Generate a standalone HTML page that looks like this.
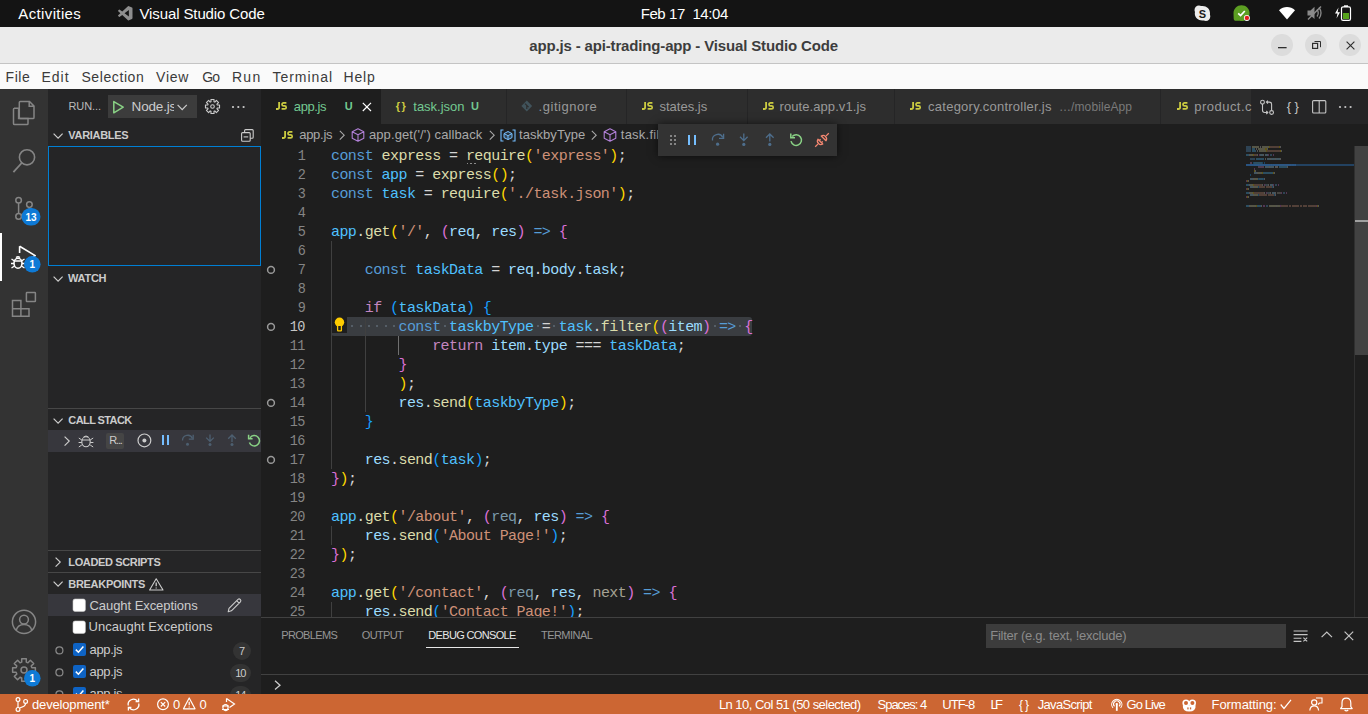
<!DOCTYPE html>
<html><head><meta charset="utf-8">
<style>
*{box-sizing:border-box;margin:0;padding:0}
html,body{width:1368px;height:714px;overflow:hidden;background:#1e1e1e;font-family:"Liberation Sans",sans-serif}
body{position:relative}
.a{position:absolute}
.t{position:absolute;white-space:pre;line-height:1}
svg{position:absolute;overflow:visible}
</style></head><body>
<div class="a" style="left:0px;top:0px;width:1368px;height:27px;background:#141414;"></div><div class="t" style='left:18.30px;top:6.30px;font-size:15px;color:#ffffff;letter-spacing:0.369px;'>Activities</div><svg style="left:118px;top:6px;" width="15" height="15" viewBox="0 0 15 15"><g transform="scale(0.145)"><path d="M96.46 10.8L75.86.87a6.23 6.23 0 0 0-7.1 1.2L29.35 38.04 12.17 25a4.16 4.16 0 0 0-5.31.24L1.35 30.25a4.16 4.16 0 0 0 0 6.15L16.25 50 1.35 63.6a4.16 4.16 0 0 0 0 6.150l5.5 5a4.16 4.16 0 0 0 5.32.24l17.18-13.040 39.4 35.96a6.23 6.23 0 0 0 7.1 1.2l20.6-9.92a6.24 6.24 0 0 0 3.540-5.63V16.43a6.24 6.24 0 0 0-3.53-5.63zM75.02 72.7L45.11 50l29.9-22.7z" fill="#8e8e8e" fill-rule="evenodd"/></g></svg><div class="t" style='left:139.50px;top:6.10px;font-size:15px;color:#ffffff;letter-spacing:-0.116px;'>Visual Studio Code</div><div class="t" style='left:640.70px;top:5.60px;font-size:15px;color:#ffffff;letter-spacing:-0.411px;'>Feb 17  14:04</div><svg style="left:1194px;top:5px;" width="17" height="16" viewBox="0 0 17 16"><path d="M5 0.5 C2.5 0.5 0.5 2.5 0.5 5 C0.5 5.8 0.7 6.5 1 7.1 C0.9 7.6 0.8 8.1 0.8 8.6 C0.8 12.6 4.1 15.6 8.2 15.6 C8.7 15.6 9.2 15.6 9.7 15.5 C10.3 15.8 11 16 11.8 16 C14.3 16 16.3 14 16.3 11.5 C16.3 10.8 16.1 10.1 15.9 9.5 C16 9 16 8.6 16 8.1 C16 4.1 12.7 1 8.6 1 C8.1 1 7.6 1 7.1 1.1 C6.5 0.7 5.8 0.5 5 0.5 Z" fill="#ececec"/><text x="8.4" y="12.6" font-family="Liberation Sans" font-weight="700" font-size="11" fill="#1a1a1a" text-anchor="middle">S</text></svg><svg style="left:1233px;top:5px;" width="18" height="17" viewBox="0 0 18 17"><path d="M8.5 0.3 C13 0.3 16.6 3.8 16.6 8.2 C16.6 12.6 13 16 8.5 16 C7.9 16 7.3 15.9 6.8 15.8 L2.8 15.8 C1.6 15.8 0.7 14.9 0.7 13.7 L0.5 8.2 C0.5 3.8 4.1 0.3 8.5 0.3Z" fill="#5c9e22"/><path d="M5.2 8.3 L7.6 10.6 L11.8 6" stroke="#fff" stroke-width="1.7" fill="none"/><circle cx="13.9" cy="12.9" r="3" fill="#fff"/><circle cx="13.9" cy="12.9" r="2.2" fill="#e0201c"/></svg><svg style="left:1279px;top:7px;" width="16" height="13" viewBox="0 0 16 13"><path d="M0 3.2 C4.6 -1 11.4 -1 16 3.2 L8 12.4 Z" fill="#ffffff"/></svg><svg style="left:1307px;top:6px;" width="16" height="14" viewBox="0 0 16 14"><path d="M0.5 4.5 H3.5 L7.5 0.8 V13 L3.5 9.5 H0.5 Z" fill="#8a8a8a"/><path d="M10 3.5 Q12.5 7 10 10.5 M12 1.5 Q16 7 12 12.5" stroke="#8a8a8a" stroke-width="1.3" fill="none"/><path d="M1 13.5 L14 0.5" stroke="#8a8a8a" stroke-width="1.4"/></svg><svg style="left:1334px;top:5px;" width="18" height="16" viewBox="0 0 18 16"><path d="M4.5 2.5 L1 8.5 H3.5 L2.5 13.5 L6 7.3 H3.6 Z" fill="#fff"/><rect x="7.5" y="1.8" width="9" height="13.6" rx="1.6" fill="none" stroke="#fff" stroke-width="1.2"/><rect x="10" y="0.3" width="4" height="1.6" fill="#fff"/><rect x="9" y="8" width="6" height="6" fill="#56a21b"/></svg><div class="a" style="left:0px;top:27px;width:1368px;height:37px;background:#ebebeb;"></div><div class="a" style="left:0px;top:63px;width:1368px;height:1px;background:#c4c4c4;"></div><div class="t" style='left:529.20px;top:38.00px;font-size:15px;color:#3d3d3d;font-weight:700;letter-spacing:-0.153px;'>app.js - api-trading-app - Visual Studio Code</div><svg style="left:1271px;top:34px;" width="22" height="22" viewBox="0 0 22 22"><circle cx="11" cy="11" r="11" fill="#dcdcdc"/></svg><svg style="left:1305px;top:34px;" width="22" height="22" viewBox="0 0 22 22"><circle cx="11" cy="11" r="11" fill="#dcdcdc"/></svg><svg style="left:1339px;top:34px;" width="22" height="22" viewBox="0 0 22 22"><circle cx="11" cy="11" r="11" fill="#dcdcdc"/></svg><svg style="left:1277.5px;top:46.6px;" width="9" height="2" viewBox="0 0 9 2"><rect x="0" y="0" width="8.6" height="1.3" fill="#2e2e2e"/></svg><svg style="left:1311px;top:40px;" width="10" height="10" viewBox="0 0 10 10"><rect x="1.6" y="3.4" width="5" height="5" fill="none" stroke="#2e2e2e" stroke-width="1.2"/><path d="M3.5 1.5 H9.5 V7.2" fill="none" stroke="#2e2e2e" stroke-width="1"/></svg><svg style="left:1345.5px;top:40.5px;" width="9" height="9" viewBox="0 0 9 9"><path d="M0.6 0.6 L8.4 8.4 M8.4 0.6 L0.6 8.4" stroke="#2e2e2e" stroke-width="1.15"/></svg><div class="a" style="left:0px;top:64px;width:1368px;height:25px;background:#fafafa;"></div><div class="t" style='left:5.60px;top:70.05px;font-size:14px;color:#3b3b3b;letter-spacing:0.543px;'>File</div><div class="t" style='left:41.40px;top:70.05px;font-size:14px;color:#3b3b3b;letter-spacing:1.022px;'>Edit</div><div class="t" style='left:81.40px;top:70.05px;font-size:14px;color:#3b3b3b;letter-spacing:0.599px;'>Selection</div><div class="t" style='left:156.10px;top:70.05px;font-size:14px;color:#3b3b3b;letter-spacing:0.740px;'>View</div><div class="t" style='left:202.30px;top:70.05px;font-size:14px;color:#3b3b3b;letter-spacing:-0.990px;'>Go</div><div class="t" style='left:232.00px;top:70.05px;font-size:14px;color:#3b3b3b;letter-spacing:1.252px;'>Run</div><div class="t" style='left:272.50px;top:70.05px;font-size:14px;color:#3b3b3b;letter-spacing:0.944px;'>Terminal</div><div class="t" style='left:343.40px;top:70.05px;font-size:14px;color:#3b3b3b;letter-spacing:0.898px;'>Help</div><div class="a" style="left:0px;top:89px;width:48px;height:605px;background:#333333;"></div><svg style="left:12px;top:100px;" width="24" height="26" viewBox="0 0 24 26"><path d="M2 8.2 H6.6 V18.6 H16 V23.5 Q16 24.6 15 24.6 H2.6 Q1.5 24.6 1.5 23.5 V9.2 Q1.5 8.2 2.6 8.2 Z" fill="none" stroke="#858585" stroke-width="1.5"/><path d="M8.3 1.5 H17.5 L22 6 V17.4 Q22 18.6 21 18.6 H8.3 Q7.3 18.6 7.3 17.5 V2.5 Q7.3 1.5 8.3 1.5 Z M17.2 1.5 V6.3 H22" fill="none" stroke="#858585" stroke-width="1.5"/></svg><svg style="left:12px;top:148px;" width="24" height="26" viewBox="0 0 24 26"><circle cx="15" cy="9.3" r="7.6" fill="none" stroke="#858585" stroke-width="1.6"/><path d="M9.7 15 L1.4 24.2" stroke="#858585" stroke-width="1.8"/></svg><svg style="left:12px;top:194px;" width="24" height="28" viewBox="0 0 24 28"><circle cx="6.6" cy="6.3" r="2.8" fill="none" stroke="#858585" stroke-width="1.5"/><circle cx="17.4" cy="10.6" r="2.8" fill="none" stroke="#858585" stroke-width="1.5"/><circle cx="6.6" cy="22.4" r="2.8" fill="none" stroke="#858585" stroke-width="1.5"/><path d="M6.6 9.1 V19.6 M17.4 13.4 Q17.4 18 9.2 20.8" fill="none" stroke="#858585" stroke-width="1.5"/></svg><svg style="left:21px;top:208px;" width="20" height="18" viewBox="0 0 20 18"><rect x="0.5" y="0" width="19" height="17.6" rx="8.8" fill="#0e7ad6"/><text x="10" y="12.8" font-family="Liberation Sans" font-weight="700" font-size="10" fill="#fff" text-anchor="middle">13</text></svg><div class="a" style="left:0px;top:233px;width:2px;height:48px;background:#ffffff;"></div><svg style="left:10px;top:244px;" width="28" height="28" viewBox="0 0 28 28"><path d="M9.6 2.2 L25.2 11.6 L18 15.8" fill="none" stroke="#ffffff" stroke-width="1.6" stroke-linejoin="round"/><path d="M9.6 2.2 V9" fill="none" stroke="#ffffff" stroke-width="1.6"/><ellipse cx="8" cy="19.3" rx="4" ry="5" fill="none" stroke="#fff" stroke-width="1.6"/><path d="M4.2 17 H11.8 M1.5 15 L4.5 17 M14.5 15 L11.5 17 M1 19.5 H4 M12 19.5 H15 M1.5 24 L4.5 22 M14.5 24 L11.5 22 M6 13.5 Q8 12 10 13.5" fill="none" stroke="#fff" stroke-width="1.4"/></svg><svg style="left:24px;top:256px;" width="17" height="17" viewBox="0 0 17 17"><circle cx="8.3" cy="8.3" r="8.3" fill="#0e7ad6"/><text x="8.4" y="12" font-family="Liberation Sans" font-weight="700" font-size="10" fill="#fff" text-anchor="middle">1</text></svg><svg style="left:11px;top:291px;" width="26" height="27" viewBox="0 0 26 27"><path d="M1.5 9.5 H9.9 V17.7 H18 V25.2 H1.5 Z M1.5 17.7 H9.9 V25.2 M9.9 17.7 V9.5" fill="none" stroke="#858585" stroke-width="1.5"/><rect x="15.4" y="1.6" width="9" height="9" rx="0.6" fill="none" stroke="#858585" stroke-width="1.5"/></svg><svg style="left:11px;top:609px;" width="26" height="26" viewBox="0 0 26 26"><circle cx="13" cy="12.8" r="11.6" fill="none" stroke="#858585" stroke-width="1.5"/><circle cx="13" cy="10.6" r="4.4" fill="none" stroke="#858585" stroke-width="1.5"/><path d="M5.2 21.2 Q7 15.6 13 15.6 Q19 15.6 20.8 21.2" fill="none" stroke="#858585" stroke-width="1.5"/></svg><svg style="left:12px;top:658px;" width="24" height="24" viewBox="0 0 24 24"><path d="M19.88 9.73 L23.37 9.70 L23.37 14.30 L19.88 14.27 L19.17 15.97 L21.67 18.41 L18.41 21.67 L15.97 19.17 L14.27 19.88 L14.30 23.37 L9.70 23.37 L9.73 19.88 L8.03 19.17 L5.59 21.67 L2.33 18.41 L4.83 15.97 L4.12 14.27 L0.63 14.30 L0.63 9.70 L4.12 9.73 L4.83 8.03 L2.33 5.59 L5.59 2.33 L8.03 4.83 L9.73 4.12 L9.70 0.63 L14.30 0.63 L14.27 4.12 L15.97 4.83 L18.41 2.33 L21.67 5.59 L19.17 8.03 Z" fill="none" stroke="#858585" stroke-width="1.5" stroke-linejoin="round"/><circle cx="12" cy="12" r="3" fill="none" stroke="#858585" stroke-width="1.5"/></svg><svg style="left:24px;top:670px;" width="17" height="17" viewBox="0 0 17 17"><circle cx="8.3" cy="8.3" r="8.3" fill="#0e7ad6"/><text x="8.4" y="12" font-family="Liberation Sans" font-weight="700" font-size="10" fill="#fff" text-anchor="middle">1</text></svg><div class="a" style="left:48px;top:89px;width:213px;height:605px;background:#252526;"></div><div class="t" style='left:68.50px;top:100.69px;font-size:11px;color:#bbbbbb;letter-spacing:-0.089px;'>RUN...</div><div class="a" style="left:108px;top:95px;width:89px;height:23px;background:#3c3c3c;"></div><svg style="left:112px;top:100px;" width="13" height="15" viewBox="0 0 13 15"><path d="M1.8 1.6 L11.2 7.2 L1.8 12.8 Z" fill="none" stroke="#89d185" stroke-width="1.5" stroke-linejoin="round"/></svg><div class="a" style="left:130px;top:95px;width:44px;height:23px;overflow:hidden"><div class="t" style='left:1.60px;top:4.57px;font-size:13.5px;color:#cccccc;letter-spacing:-0.171px;'>Node.js</div></div><svg style="left:177px;top:104px;" width="11" height="7" viewBox="0 0 11 7"><path d="M0.6 0.8 L5.2 5.6 L9.8 0.8" fill="none" stroke="#cccccc" stroke-width="1.2"/></svg><svg style="left:204.6px;top:99.4px;" width="15" height="15" viewBox="0 0 15 15"><path d="M12.28 6.02 L14.53 5.93 L14.53 9.07 L12.28 8.98 L11.92 9.83 L13.58 11.36 L11.36 13.58 L9.83 11.92 L8.98 12.28 L9.07 14.53 L5.93 14.53 L6.02 12.28 L5.17 11.92 L3.64 13.58 L1.42 11.36 L3.08 9.83 L2.72 8.98 L0.47 9.07 L0.47 5.93 L2.72 6.02 L3.08 5.17 L1.42 3.64 L3.64 1.42 L5.17 3.08 L6.02 2.72 L5.93 0.47 L9.07 0.47 L8.98 2.72 L9.83 3.08 L11.36 1.42 L13.58 3.64 L11.92 5.17 Z" fill="none" stroke="#cccccc" stroke-width="1.1" stroke-linejoin="round"/><circle cx="7.5" cy="7.5" r="1.8" fill="none" stroke="#cccccc" stroke-width="1.1"/></svg><svg style="left:231px;top:105px;" width="15" height="4" viewBox="0 0 15 4"><circle cx="2" cy="2" r="1.1" fill="#cccccc"/><circle cx="7.3" cy="2" r="1.1" fill="#cccccc"/><circle cx="12.6" cy="2" r="1.1" fill="#cccccc"/></svg><svg style="left:53px;top:132.5px;" width="11" height="7" viewBox="0 0 11 7"><path d="M0.6 0.6 L5.1 5.2 L9.6 0.6" fill="none" stroke="#cccccc" stroke-width="1.2"/></svg><div class="t" style='left:68.30px;top:130.29px;font-size:11px;color:#cccccc;font-weight:700;letter-spacing:-0.301px;'>VARIABLES</div><svg style="left:240px;top:128px;" width="15" height="15" viewBox="0 0 15 15"><rect x="4.6" y="1.6" width="8.6" height="8.6" rx="1" fill="none" stroke="#cccccc" stroke-width="1.1"/><rect x="1.6" y="4.6" width="8.6" height="8.6" rx="1" fill="#252526" stroke="#cccccc" stroke-width="1.1"/><path d="M3.6 8.9 H8.2" stroke="#cccccc" stroke-width="1.1"/></svg><div class="a" style="left:48px;top:146px;width:213px;height:120px;background:transparent;border:1px solid #007fd4"></div><svg style="left:53px;top:275.6px;" width="11" height="7" viewBox="0 0 11 7"><path d="M0.6 0.6 L5.1 5.2 L9.6 0.6" fill="none" stroke="#cccccc" stroke-width="1.2"/></svg><div class="t" style='left:68.10px;top:273.49px;font-size:11px;color:#cccccc;font-weight:700;letter-spacing:-0.266px;'>WATCH</div><div class="a" style="left:48px;top:408px;width:213px;height:1px;background:#474747;"></div><svg style="left:53px;top:417.6px;" width="11" height="7" viewBox="0 0 11 7"><path d="M0.6 0.6 L5.1 5.2 L9.6 0.6" fill="none" stroke="#cccccc" stroke-width="1.2"/></svg><div class="t" style='left:68.30px;top:415.49px;font-size:11px;color:#cccccc;font-weight:700;letter-spacing:-0.590px;'>CALL STACK</div><div class="a" style="left:48px;top:430px;width:213px;height:22px;background:#37373d;"></div><svg style="left:64.2px;top:436px;" width="7" height="11" viewBox="0 0 7 11"><path d="M0.6 0.6 L5.2 5.1 L0.6 9.6" fill="none" stroke="#cccccc" stroke-width="1.2"/></svg><svg style="left:78px;top:433px;" width="16" height="16" viewBox="0 0 16 16"><ellipse cx="8" cy="8.8" rx="4.2" ry="5" fill="none" stroke="#cccccc" stroke-width="1.1"/><path d="M3.8 7 H12.2 M0.8 5 L3.8 7 M15.2 5 L12.2 7 M0.6 9.5 H3.8 M12.2 9.5 H15.4 M0.8 14 L3.8 12 M15.2 14 L12.2 12 M5.5 4 Q8 2 10.5 4" fill="none" stroke="#cccccc" stroke-width="1"/></svg><div class="a" style="left:106px;top:433px;width:18px;height:16px;background:#454545;border-radius:2px"></div><div class="t" style='left:109.30px;top:435.19px;font-size:11px;color:#cccccc;letter-spacing:-1.185px;'>R...</div><svg style="left:136.5px;top:432.6px;" width="15" height="15" viewBox="0 0 15 15"><circle cx="7.4" cy="7.4" r="6.4" fill="none" stroke="#cccccc" stroke-width="1.2"/><circle cx="7.4" cy="7.4" r="2" fill="#cccccc"/></svg><div class="a" style="left:162px;top:435px;width:2px;height:10px;background:#75beff;"></div><div class="a" style="left:167.4px;top:435px;width:2px;height:10px;background:#75beff;"></div><svg style="left:181px;top:434px;" width="14" height="13" viewBox="0 0 14 13"><path d="M1.5 6.5 A5.2 5.2 0 0 1 11.5 4.5" fill="none" stroke="#4d5f70" stroke-width="1.3"/><path d="M12.2 0.8 V5.2 H7.8" fill="none" stroke="#4d5f70" stroke-width="1.3"/><circle cx="6.5" cy="10.3" r="1.5" fill="#4d5f70"/></svg><svg style="left:203px;top:434px;" width="14" height="13" viewBox="0 0 14 13"><path d="M7 0.5 V7 M3.2 3.6 L7 7.4 L10.8 3.6" fill="none" stroke="#4d5f70" stroke-width="1.3"/><circle cx="7" cy="10.5" r="1.5" fill="#4d5f70"/></svg><svg style="left:225px;top:434px;" width="14" height="13" viewBox="0 0 14 13"><path d="M7 8 V1 M3.2 4.8 L7 1 L10.8 4.8" fill="none" stroke="#4d5f70" stroke-width="1.3"/><circle cx="7" cy="10.5" r="1.5" fill="#4d5f70"/></svg><svg style="left:247px;top:434px;" width="14" height="13" viewBox="0 0 14 13"><path d="M3 3.8 A5.2 5.2 0 1 1 2.4 8.5" fill="none" stroke="#89d185" stroke-width="1.5"/><path d="M1.6 0.8 V4.8 H5.6" fill="none" stroke="#89d185" stroke-width="1.5"/></svg><div class="a" style="left:48px;top:550px;width:213px;height:1px;background:#474747;"></div><svg style="left:55px;top:557px;" width="7" height="11" viewBox="0 0 7 11"><path d="M0.6 0.6 L5.2 5.1 L0.6 9.6" fill="none" stroke="#cccccc" stroke-width="1.2"/></svg><div class="t" style='left:68.30px;top:557.29px;font-size:11px;color:#cccccc;font-weight:700;letter-spacing:-0.364px;'>LOADED SCRIPTS</div><div class="a" style="left:48px;top:572px;width:213px;height:1px;background:#474747;"></div><svg style="left:53px;top:581px;" width="11" height="7" viewBox="0 0 11 7"><path d="M0.6 0.6 L5.1 5.2 L9.6 0.6" fill="none" stroke="#cccccc" stroke-width="1.2"/></svg><div class="t" style='left:68.30px;top:579.19px;font-size:11px;color:#cccccc;font-weight:700;letter-spacing:-0.302px;'>BREAKPOINTS</div><svg style="left:149px;top:578px;" width="15" height="13" viewBox="0 0 15 13"><path d="M7.2 0.8 L14 12 H0.6 Z" fill="none" stroke="#cccccc" stroke-width="1.1" stroke-linejoin="round"/><path d="M7.2 4.5 V8.2 M7.2 9.4 V10.6" stroke="#cccccc" stroke-width="1.3"/></svg><div class="a" style="left:48px;top:594px;width:213px;height:22px;background:#37373d;"></div><svg style="left:73px;top:599.3px;" width="13" height="13" viewBox="0 0 13 13"><rect x="0" y="0" width="12.4" height="12.4" rx="2" fill="#ffffff" stroke="#cacaca" stroke-width="0.6"/></svg><div class="t" style='left:89.50px;top:598.59px;font-size:13px;color:#cccccc;letter-spacing:-0.058px;'>Caught Exceptions</div><svg style="left:227px;top:598px;" width="16" height="15" viewBox="0 0 16 15"><path d="M1.2 13.8 L2 10.4 L11 1.4 Q12.2 0.4 13.4 1.6 Q14.4 2.8 13.4 3.8 L4.4 12.8 Z M9.8 2.8 L12.2 5.2" fill="none" stroke="#cccccc" stroke-width="1.1" stroke-linejoin="round"/></svg><svg style="left:73px;top:621.3px;" width="13" height="13" viewBox="0 0 13 13"><rect x="0" y="0" width="12.4" height="12.4" rx="2" fill="#ffffff" stroke="#cacaca" stroke-width="0.6"/></svg><div class="t" style='left:88.50px;top:620.49px;font-size:13px;color:#cccccc;letter-spacing:0.064px;'>Uncaught Exceptions</div><svg style="left:55px;top:645.5px;" width="9" height="9" viewBox="0 0 9 9"><circle cx="4.4" cy="4.4" r="3.5" fill="none" stroke="#8a8a8a" stroke-width="1.2"/></svg><svg style="left:73px;top:643px;" width="13" height="13" viewBox="0 0 13 13"><rect x="0" y="0" width="13" height="13" rx="2" fill="#0e63c4"/><path d="M2.8 6.6 L5.4 9.2 L10.4 3.6" fill="none" stroke="#ffffff" stroke-width="1.5"/></svg><div class="t" style='left:89.50px;top:643.39px;font-size:13px;color:#cccccc;letter-spacing:-0.318px;'>app.js</div><svg style="left:233px;top:642px;" width="18" height="18" viewBox="0 0 18 18"><circle cx="9" cy="9" r="9" fill="#333333"/></svg><div class="t" style='left:239.00px;top:645.69px;font-size:11px;color:#cccccc;'>7</div><svg style="left:55px;top:667.5px;" width="9" height="9" viewBox="0 0 9 9"><circle cx="4.4" cy="4.4" r="3.5" fill="none" stroke="#8a8a8a" stroke-width="1.2"/></svg><svg style="left:73px;top:665px;" width="13" height="13" viewBox="0 0 13 13"><rect x="0" y="0" width="13" height="13" rx="2" fill="#0e63c4"/><path d="M2.8 6.6 L5.4 9.2 L10.4 3.6" fill="none" stroke="#ffffff" stroke-width="1.5"/></svg><div class="t" style='left:89.50px;top:665.39px;font-size:13px;color:#cccccc;letter-spacing:-0.318px;'>app.js</div><div class="a" style="left:230.3px;top:664px;width:21px;height:18px;background:#333333;border-radius:9px"></div><div class="t" style='left:235.20px;top:667.69px;font-size:11px;color:#cccccc;letter-spacing:-1.118px;'>10</div><svg style="left:55px;top:689.5px;" width="9" height="9" viewBox="0 0 9 9"><circle cx="4.4" cy="4.4" r="3.5" fill="none" stroke="#8a8a8a" stroke-width="1.2"/></svg><svg style="left:73px;top:687px;" width="13" height="13" viewBox="0 0 13 13"><rect x="0" y="0" width="13" height="13" rx="2" fill="#0e63c4"/><path d="M2.8 6.6 L5.4 9.2 L10.4 3.6" fill="none" stroke="#ffffff" stroke-width="1.5"/></svg><div class="t" style='left:89.50px;top:687.39px;font-size:13px;color:#cccccc;letter-spacing:-0.318px;'>app.js</div><div class="a" style="left:230.3px;top:686px;width:21px;height:18px;background:#333333;border-radius:9px"></div><div class="t" style='left:235.20px;top:689.69px;font-size:11px;color:#cccccc;letter-spacing:-1.118px;'>14</div><div class="a" style="left:261px;top:89px;width:1107px;height:35px;background:#252526;"></div><div class="a" style="left:261px;top:89px;width:119.5px;height:35px;background:#1e1e1e;"></div><div class="a" style="left:380.5px;top:89px;width:125.89999999999998px;height:35px;background:#2d2d2d;"></div><div class="a" style="left:507.4px;top:89px;width:118.89999999999998px;height:35px;background:#2d2d2d;"></div><div class="a" style="left:627.3px;top:89px;width:119.5px;height:35px;background:#2d2d2d;"></div><div class="a" style="left:747.8px;top:89px;width:146.5px;height:35px;background:#2d2d2d;"></div><div class="a" style="left:895.3px;top:89px;width:264.70000000000005px;height:35px;background:#2d2d2d;"></div><div class="a" style="left:1161px;top:89px;width:90px;height:35px;background:#2d2d2d;"></div><svg style="left:276px;top:102.2px;" width="11" height="8" viewBox="0 0 11 8"><path d="M3.1 0 V5.2 Q3.1 7 1.3 7 H0" fill="none" stroke="#cbcb41" stroke-width="1.8"/><path d="M10.4 0.9 H7.6 Q6 0.9 6 2.4 Q6 3.9 7.6 3.9 H8.6 Q10.2 3.9 10.2 5.4 Q10.2 6.9 8.6 6.9 H5.6" fill="none" stroke="#cbcb41" stroke-width="1.7"/></svg><div class="t" style='left:293.80px;top:99.69px;font-size:13px;color:#73c991;letter-spacing:-0.398px;'>app.js</div><div class="t" style='left:344.70px;top:101.39px;font-size:11px;color:#73c991;font-weight:700;'>U</div><svg style="left:361.5px;top:102px;" width="10" height="10" viewBox="0 0 10 10"><path d="M0.8 0.8 L9 9 M9 0.8 L0.8 9" stroke="#ffffff" stroke-width="1.2"/></svg><div class="t" style='left:395.70px;top:101.09px;font-size:11px;color:#cbcb41;font-weight:700;letter-spacing:-0.768px;'>{ }</div><div class="t" style='left:413.30px;top:99.69px;font-size:13px;color:#73c991;letter-spacing:-0.021px;'>task.json</div><div class="t" style='left:470.90px;top:101.39px;font-size:11px;color:#73c991;font-weight:700;'>U</div><svg style="left:521px;top:100px;" width="12" height="12" viewBox="0 0 12 12"><path d="M5.8 0.6 L11.2 6 L5.8 11.4 L0.4 6 Z" fill="#41535b"/><path d="M4 3.6 L7.6 7.2 M5.8 5.4 V9" stroke="#2d2d2d" stroke-width="1.2"/></svg><div class="t" style='left:538.60px;top:99.69px;font-size:13px;color:#999999;letter-spacing:0.528px;'>.gitignore</div><svg style="left:641.9px;top:102.2px;" width="11" height="8" viewBox="0 0 11 8"><path d="M3.1 0 V5.2 Q3.1 7 1.3 7 H0" fill="none" stroke="#cbcb41" stroke-width="1.8"/><path d="M10.4 0.9 H7.6 Q6 0.9 6 2.4 Q6 3.9 7.6 3.9 H8.6 Q10.2 3.9 10.2 5.4 Q10.2 6.9 8.6 6.9 H5.6" fill="none" stroke="#cbcb41" stroke-width="1.7"/></svg><div class="t" style='left:659.50px;top:99.69px;font-size:13px;color:#999999;'>states.js</div><svg style="left:762.5px;top:102.2px;" width="11" height="8" viewBox="0 0 11 8"><path d="M3.1 0 V5.2 Q3.1 7 1.3 7 H0" fill="none" stroke="#cbcb41" stroke-width="1.8"/><path d="M10.4 0.9 H7.6 Q6 0.9 6 2.4 Q6 3.9 7.6 3.9 H8.6 Q10.2 3.9 10.2 5.4 Q10.2 6.9 8.6 6.9 H5.6" fill="none" stroke="#cbcb41" stroke-width="1.7"/></svg><div class="t" style='left:779.50px;top:99.69px;font-size:13px;color:#999999;letter-spacing:0.080px;'>route.app.v1.js</div><svg style="left:910.4px;top:102.2px;" width="11" height="8" viewBox="0 0 11 8"><path d="M3.1 0 V5.2 Q3.1 7 1.3 7 H0" fill="none" stroke="#cbcb41" stroke-width="1.8"/><path d="M10.4 0.9 H7.6 Q6 0.9 6 2.4 Q6 3.9 7.6 3.9 H8.6 Q10.2 3.9 10.2 5.4 Q10.2 6.9 8.6 6.9 H5.6" fill="none" stroke="#cbcb41" stroke-width="1.7"/></svg><div class="t" style='left:928.10px;top:99.69px;font-size:13px;color:#999999;letter-spacing:0.240px;'>category.controller.js</div><div class="t" style='left:1059.00px;top:100.54px;font-size:12px;color:#7a7a7a;letter-spacing:0.094px;'>…/mobileApp</div><svg style="left:1176.6px;top:102.2px;" width="11" height="8" viewBox="0 0 11 8"><path d="M3.1 0 V5.2 Q3.1 7 1.3 7 H0" fill="none" stroke="#cbcb41" stroke-width="1.8"/><path d="M10.4 0.9 H7.6 Q6 0.9 6 2.4 Q6 3.9 7.6 3.9 H8.6 Q10.2 3.9 10.2 5.4 Q10.2 6.9 8.6 6.9 H5.6" fill="none" stroke="#cbcb41" stroke-width="1.7"/></svg><div class="a" style="left:1161px;top:89px;width:91px;height:35px;overflow:hidden"><div class="t" style='left:33.20px;top:10.69px;font-size:13px;color:#999999;letter-spacing:0.489px;'>product.controller.js</div></div><svg style="left:1259px;top:99px;" width="17" height="17" viewBox="0 0 17 17"><circle cx="3.5" cy="3.2" r="1.9" fill="none" stroke="#c5c5c5" stroke-width="1.1"/><circle cx="12.6" cy="13.5" r="1.9" fill="none" stroke="#c5c5c5" stroke-width="1.1"/><path d="M3.5 5.1 V11.3 Q3.5 13.5 5.7 13.5 H8.8 M7.3 12 L8.8 13.5 L7.3 15 M12.6 11.6 V5.2 Q12.6 3.1 10.5 3.1 H7.4 M8.9 1.6 L7.4 3.1 L8.9 4.6" fill="none" stroke="#c5c5c5" stroke-width="1.1"/></svg><div class="t" style='left:1286.70px;top:100.49px;font-size:13px;color:#c5c5c5;letter-spacing:-0.127px;'>{ }</div><svg style="left:1312px;top:100px;" width="15" height="14" viewBox="0 0 15 14"><rect x="0.6" y="0.6" width="13.2" height="12.4" rx="1" fill="none" stroke="#c5c5c5" stroke-width="1.1"/><path d="M7.2 0.6 V13" stroke="#c5c5c5" stroke-width="1.1"/></svg><svg style="left:1338px;top:105px;" width="15" height="4" viewBox="0 0 15 4"><circle cx="2" cy="2" r="1.1" fill="#c5c5c5"/><circle cx="7.3" cy="2" r="1.1" fill="#c5c5c5"/><circle cx="12.6" cy="2" r="1.1" fill="#c5c5c5"/></svg><div class="a" style="left:261px;top:124px;width:1107px;height:22px;background:#1e1e1e;"></div><svg style="left:281.7px;top:131.1px;" width="11" height="8" viewBox="0 0 11 8"><path d="M3.1 0 V5.2 Q3.1 7 1.3 7 H0" fill="none" stroke="#cbcb41" stroke-width="1.8"/><path d="M10.4 0.9 H7.6 Q6 0.9 6 2.4 Q6 3.9 7.6 3.9 H8.6 Q10.2 3.9 10.2 5.4 Q10.2 6.9 8.6 6.9 H5.6" fill="none" stroke="#cbcb41" stroke-width="1.7"/></svg><div class="t" style='left:299.20px;top:127.89px;font-size:13px;color:#a9a9a9;letter-spacing:-0.278px;'>app.js</div><svg style="left:338.5px;top:130px;" width="7" height="11" viewBox="0 0 7 11"><path d="M0.8 0.8 L5.2 5.2 L0.8 9.6" fill="none" stroke="#a9a9a9" stroke-width="1.1"/></svg><svg style="left:350.6px;top:128px;" width="14" height="14" viewBox="0 0 14 14"><path d="M7 0.8 L12.8 3.8 V10.2 L7 13.2 L1.2 10.2 V3.8 Z M1.2 3.8 L7 6.8 L12.8 3.8 M7 6.8 V13.2" fill="none" stroke="#b180d7" stroke-width="1.1" stroke-linejoin="round"/></svg><div class="t" style='left:368.90px;top:127.89px;font-size:13px;color:#a9a9a9;letter-spacing:0.111px;'>app.get(&#x27;/&#x27;) callback</div><svg style="left:489.3px;top:130px;" width="7" height="11" viewBox="0 0 7 11"><path d="M0.8 0.8 L5.2 5.2 L0.8 9.6" fill="none" stroke="#a9a9a9" stroke-width="1.1"/></svg><svg style="left:499.5px;top:129px;" width="16" height="13" viewBox="0 0 16 13"><path d="M3.5 1 H1 V12 H3.5 M12.5 1 H15 V12 H12.5" fill="none" stroke="#75beff" stroke-width="1.1"/><path d="M8 2.5 L12 4.6 V8.6 L8 10.6 L4 8.6 V4.6 Z M4 4.6 L8 6.6 L12 4.6 M8 6.6 V10.6" fill="#75beff" fill-opacity="0.25" stroke="#75beff" stroke-width="1"/></svg><div class="t" style='left:519.00px;top:127.89px;font-size:13px;color:#a9a9a9;letter-spacing:0.053px;'>taskbyType</div><svg style="left:591px;top:130px;" width="7" height="11" viewBox="0 0 7 11"><path d="M0.8 0.8 L5.2 5.2 L0.8 9.6" fill="none" stroke="#a9a9a9" stroke-width="1.1"/></svg><svg style="left:602.6px;top:128px;" width="14" height="14" viewBox="0 0 14 14"><path d="M7 0.8 L12.8 3.8 V10.2 L7 13.2 L1.2 10.2 V3.8 Z M1.2 3.8 L7 6.8 L12.8 3.8 M7 6.8 V13.2" fill="none" stroke="#b180d7" stroke-width="1.1" stroke-linejoin="round"/></svg><div class="a" style="left:618px;top:124px;width:40px;height:22px;overflow:hidden"><div class="t" style='left:2.80px;top:3.89px;font-size:13px;color:#a9a9a9;letter-spacing:0.232px;'>task.filter</div></div><div class="a" style="left:261px;top:146px;width:1107px;height:471px;background:#1e1e1e;"></div><div class="a" style="left:331px;top:317px;width:420.5px;height:19px;background:#3a3d41;border-radius:3px"></div><div class="a" style="left:331px;top:317px;width:16px;height:16px;background:#1e1e1e;"></div><div class="a" style="left:331px;top:241px;width:1px;height:228px;background:#404040;"></div><div class="a" style="left:364.72px;top:317px;width:1px;height:95px;background:#404040;"></div><div class="a" style="left:398.44px;top:336px;width:1px;height:19px;background:#707070;"></div><div class="a" style="left:331px;top:526px;width:1px;height:19px;background:#404040;"></div><div class="a" style="left:331px;top:602px;width:1px;height:19px;background:#404040;"></div><div class="a" style="left:351.075px;top:325px;width:2px;height:2px;background:#5f6a74;border-radius:1px"></div><div class="a" style="left:359.505px;top:325px;width:2px;height:2px;background:#5f6a74;border-radius:1px"></div><div class="a" style="left:367.935px;top:325px;width:2px;height:2px;background:#5f6a74;border-radius:1px"></div><div class="a" style="left:376.36499999999995px;top:325px;width:2px;height:2px;background:#5f6a74;border-radius:1px"></div><div class="a" style="left:384.79499999999996px;top:325px;width:2px;height:2px;background:#5f6a74;border-radius:1px"></div><div class="a" style="left:393.22499999999997px;top:325px;width:2px;height:2px;background:#5f6a74;border-radius:1px"></div><div class="a" style="left:443.805px;top:325px;width:2px;height:2px;background:#5f6a74;border-radius:1px"></div><div class="a" style="left:536.535px;top:325px;width:2px;height:2px;background:#5f6a74;border-radius:1px"></div><div class="a" style="left:553.3950000000001px;top:325px;width:2px;height:2px;background:#5f6a74;border-radius:1px"></div><div class="a" style="left:713.5649999999999px;top:325px;width:2px;height:2px;background:#5f6a74;border-radius:1px"></div><div class="a" style="left:738.855px;top:325px;width:2px;height:2px;background:#5f6a74;border-radius:1px"></div><svg style="left:334px;top:317px;" width="12" height="16" viewBox="0 0 12 16"><circle cx="5.5" cy="5.2" r="4.7" fill="#ffcc00"/><rect x="3.6" y="8.4" width="3.8" height="5.4" rx="0.6" fill="#1e1e1e" stroke="#ffcc00" stroke-width="1.3"/></svg><div class="a" style="left:261px;top:146px;width:1093px;height:471px;overflow:hidden"><div class="t" style="left:35.57px;top:3.31px;font-family:'Liberation Mono';font-size:15px;letter-spacing:-0.570px;color:#858585;width:8.43px;text-align:right;transform:scaleX(0.9);transform-origin:100% 50%">1</div><div class="t" style="left:70.00px;top:2.51px;font-family:'Liberation Mono';font-size:15px;letter-spacing:-0.570px"><span style="color:#569cd6">const</span><span style="color:#d4d4d4"> </span><span style="color:#dcdcaa">express</span><span style="color:#d4d4d4"> = </span><span style="color:#dcdcaa">require</span><span style="color:#ffd700">(</span><span style="color:#ce9178">&#x27;express&#x27;</span><span style="color:#ffd700">)</span><span style="color:#d4d4d4">;</span></div><div class="t" style="left:35.57px;top:22.31px;font-family:'Liberation Mono';font-size:15px;letter-spacing:-0.570px;color:#858585;width:8.43px;text-align:right;transform:scaleX(0.9);transform-origin:100% 50%">2</div><div class="t" style="left:70.00px;top:21.51px;font-family:'Liberation Mono';font-size:15px;letter-spacing:-0.570px"><span style="color:#569cd6">const</span><span style="color:#d4d4d4"> </span><span style="color:#4fc1ff">app</span><span style="color:#d4d4d4"> = </span><span style="color:#dcdcaa">express</span><span style="color:#ffd700">()</span><span style="color:#d4d4d4">;</span></div><div class="t" style="left:35.57px;top:41.31px;font-family:'Liberation Mono';font-size:15px;letter-spacing:-0.570px;color:#858585;width:8.43px;text-align:right;transform:scaleX(0.9);transform-origin:100% 50%">3</div><div class="t" style="left:70.00px;top:40.51px;font-family:'Liberation Mono';font-size:15px;letter-spacing:-0.570px"><span style="color:#569cd6">const</span><span style="color:#d4d4d4"> </span><span style="color:#4fc1ff">task</span><span style="color:#d4d4d4"> = </span><span style="color:#dcdcaa">require</span><span style="color:#ffd700">(</span><span style="color:#ce9178">&#x27;./task.json&#x27;</span><span style="color:#ffd700">)</span><span style="color:#d4d4d4">;</span></div><div class="t" style="left:35.57px;top:60.31px;font-family:'Liberation Mono';font-size:15px;letter-spacing:-0.570px;color:#858585;width:8.43px;text-align:right;transform:scaleX(0.9);transform-origin:100% 50%">4</div><div class="t" style="left:35.57px;top:79.31px;font-family:'Liberation Mono';font-size:15px;letter-spacing:-0.570px;color:#858585;width:8.43px;text-align:right;transform:scaleX(0.9);transform-origin:100% 50%">5</div><div class="t" style="left:70.00px;top:78.51px;font-family:'Liberation Mono';font-size:15px;letter-spacing:-0.570px"><span style="color:#4fc1ff">app</span><span style="color:#d4d4d4">.</span><span style="color:#dcdcaa">get</span><span style="color:#ffd700">(</span><span style="color:#ce9178">&#x27;/&#x27;</span><span style="color:#d4d4d4">, </span><span style="color:#da70d6">(</span><span style="color:#9cdcfe">req</span><span style="color:#d4d4d4">, </span><span style="color:#9cdcfe">res</span><span style="color:#da70d6">)</span><span style="color:#d4d4d4"> </span><span style="color:#569cd6">=&gt;</span><span style="color:#d4d4d4"> </span><span style="color:#da70d6">{</span></div><div class="t" style="left:35.57px;top:98.31px;font-family:'Liberation Mono';font-size:15px;letter-spacing:-0.570px;color:#858585;width:8.43px;text-align:right;transform:scaleX(0.9);transform-origin:100% 50%">6</div><div class="t" style="left:35.57px;top:117.31px;font-family:'Liberation Mono';font-size:15px;letter-spacing:-0.570px;color:#858585;width:8.43px;text-align:right;transform:scaleX(0.9);transform-origin:100% 50%">7</div><div class="t" style="left:70.00px;top:116.51px;font-family:'Liberation Mono';font-size:15px;letter-spacing:-0.570px"><span style="color:#d4d4d4">    </span><span style="color:#569cd6">const</span><span style="color:#d4d4d4"> </span><span style="color:#4fc1ff">taskData</span><span style="color:#d4d4d4"> = </span><span style="color:#9cdcfe">req</span><span style="color:#d4d4d4">.</span><span style="color:#9cdcfe">body</span><span style="color:#d4d4d4">.</span><span style="color:#9cdcfe">task</span><span style="color:#d4d4d4">;</span></div><div class="t" style="left:35.57px;top:136.31px;font-family:'Liberation Mono';font-size:15px;letter-spacing:-0.570px;color:#858585;width:8.43px;text-align:right;transform:scaleX(0.9);transform-origin:100% 50%">8</div><div class="t" style="left:35.57px;top:155.31px;font-family:'Liberation Mono';font-size:15px;letter-spacing:-0.570px;color:#858585;width:8.43px;text-align:right;transform:scaleX(0.9);transform-origin:100% 50%">9</div><div class="t" style="left:70.00px;top:154.51px;font-family:'Liberation Mono';font-size:15px;letter-spacing:-0.570px"><span style="color:#d4d4d4">    </span><span style="color:#c586c0">if</span><span style="color:#d4d4d4"> </span><span style="color:#179fff">(</span><span style="color:#4fc1ff">taskData</span><span style="color:#179fff">)</span><span style="color:#d4d4d4"> </span><span style="color:#179fff">{</span></div><div class="t" style="left:27.14px;top:174.31px;font-family:'Liberation Mono';font-size:15px;letter-spacing:-0.570px;color:#c6c6c6;width:16.86px;text-align:right;transform:scaleX(0.9);transform-origin:100% 50%">10</div><div class="t" style="left:70.00px;top:173.51px;font-family:'Liberation Mono';font-size:15px;letter-spacing:-0.570px"><span style="color:#d4d4d4">        </span><span style="color:#569cd6">const</span><span style="color:#d4d4d4"> </span><span style="color:#4fc1ff">taskbyType</span><span style="color:#d4d4d4"> = </span><span style="color:#4fc1ff">task</span><span style="color:#d4d4d4">.</span><span style="color:#dcdcaa">filter</span><span style="color:#ffd700">(</span><span style="color:#da70d6">(</span><span style="color:#9cdcfe">item</span><span style="color:#da70d6">)</span><span style="color:#d4d4d4"> </span><span style="color:#569cd6">=&gt;</span><span style="color:#d4d4d4"> </span><span style="color:#da70d6">{</span></div><div class="t" style="left:27.14px;top:193.31px;font-family:'Liberation Mono';font-size:15px;letter-spacing:-0.570px;color:#858585;width:16.86px;text-align:right;transform:scaleX(0.9);transform-origin:100% 50%">11</div><div class="t" style="left:70.00px;top:192.51px;font-family:'Liberation Mono';font-size:15px;letter-spacing:-0.570px"><span style="color:#d4d4d4">            </span><span style="color:#c586c0">return</span><span style="color:#d4d4d4"> </span><span style="color:#9cdcfe">item</span><span style="color:#d4d4d4">.</span><span style="color:#9cdcfe">type</span><span style="color:#d4d4d4"> === </span><span style="color:#4fc1ff">taskData</span><span style="color:#d4d4d4">;</span></div><div class="t" style="left:27.14px;top:212.31px;font-family:'Liberation Mono';font-size:15px;letter-spacing:-0.570px;color:#858585;width:16.86px;text-align:right;transform:scaleX(0.9);transform-origin:100% 50%">12</div><div class="t" style="left:70.00px;top:211.51px;font-family:'Liberation Mono';font-size:15px;letter-spacing:-0.570px"><span style="color:#d4d4d4">        </span><span style="color:#da70d6">}</span></div><div class="t" style="left:27.14px;top:231.31px;font-family:'Liberation Mono';font-size:15px;letter-spacing:-0.570px;color:#858585;width:16.86px;text-align:right;transform:scaleX(0.9);transform-origin:100% 50%">13</div><div class="t" style="left:70.00px;top:230.51px;font-family:'Liberation Mono';font-size:15px;letter-spacing:-0.570px"><span style="color:#d4d4d4">        </span><span style="color:#ffd700">)</span><span style="color:#d4d4d4">;</span></div><div class="t" style="left:27.14px;top:250.31px;font-family:'Liberation Mono';font-size:15px;letter-spacing:-0.570px;color:#858585;width:16.86px;text-align:right;transform:scaleX(0.9);transform-origin:100% 50%">14</div><div class="t" style="left:70.00px;top:249.51px;font-family:'Liberation Mono';font-size:15px;letter-spacing:-0.570px"><span style="color:#d4d4d4">        </span><span style="color:#9cdcfe">res</span><span style="color:#d4d4d4">.</span><span style="color:#dcdcaa">send</span><span style="color:#ffd700">(</span><span style="color:#4fc1ff">taskbyType</span><span style="color:#ffd700">)</span><span style="color:#d4d4d4">;</span></div><div class="t" style="left:27.14px;top:269.31px;font-family:'Liberation Mono';font-size:15px;letter-spacing:-0.570px;color:#858585;width:16.86px;text-align:right;transform:scaleX(0.9);transform-origin:100% 50%">15</div><div class="t" style="left:70.00px;top:268.51px;font-family:'Liberation Mono';font-size:15px;letter-spacing:-0.570px"><span style="color:#d4d4d4">    </span><span style="color:#179fff">}</span></div><div class="t" style="left:27.14px;top:288.31px;font-family:'Liberation Mono';font-size:15px;letter-spacing:-0.570px;color:#858585;width:16.86px;text-align:right;transform:scaleX(0.9);transform-origin:100% 50%">16</div><div class="t" style="left:27.14px;top:307.31px;font-family:'Liberation Mono';font-size:15px;letter-spacing:-0.570px;color:#858585;width:16.86px;text-align:right;transform:scaleX(0.9);transform-origin:100% 50%">17</div><div class="t" style="left:70.00px;top:306.51px;font-family:'Liberation Mono';font-size:15px;letter-spacing:-0.570px"><span style="color:#d4d4d4">    </span><span style="color:#9cdcfe">res</span><span style="color:#d4d4d4">.</span><span style="color:#dcdcaa">send</span><span style="color:#179fff">(</span><span style="color:#4fc1ff">task</span><span style="color:#179fff">)</span><span style="color:#d4d4d4">;</span></div><div class="t" style="left:27.14px;top:326.31px;font-family:'Liberation Mono';font-size:15px;letter-spacing:-0.570px;color:#858585;width:16.86px;text-align:right;transform:scaleX(0.9);transform-origin:100% 50%">18</div><div class="t" style="left:70.00px;top:325.51px;font-family:'Liberation Mono';font-size:15px;letter-spacing:-0.570px"><span style="color:#da70d6">}</span><span style="color:#ffd700">)</span><span style="color:#d4d4d4">;</span></div><div class="t" style="left:27.14px;top:345.31px;font-family:'Liberation Mono';font-size:15px;letter-spacing:-0.570px;color:#858585;width:16.86px;text-align:right;transform:scaleX(0.9);transform-origin:100% 50%">19</div><div class="t" style="left:27.14px;top:364.31px;font-family:'Liberation Mono';font-size:15px;letter-spacing:-0.570px;color:#858585;width:16.86px;text-align:right;transform:scaleX(0.9);transform-origin:100% 50%">20</div><div class="t" style="left:70.00px;top:363.51px;font-family:'Liberation Mono';font-size:15px;letter-spacing:-0.570px"><span style="color:#4fc1ff">app</span><span style="color:#d4d4d4">.</span><span style="color:#dcdcaa">get</span><span style="color:#ffd700">(</span><span style="color:#ce9178">&#x27;/about&#x27;</span><span style="color:#d4d4d4">, </span><span style="color:#da70d6">(</span><span style="color:#7c9aab">req</span><span style="color:#d4d4d4">, </span><span style="color:#9cdcfe">res</span><span style="color:#da70d6">)</span><span style="color:#d4d4d4"> </span><span style="color:#569cd6">=&gt;</span><span style="color:#d4d4d4"> </span><span style="color:#da70d6">{</span></div><div class="t" style="left:27.14px;top:383.31px;font-family:'Liberation Mono';font-size:15px;letter-spacing:-0.570px;color:#858585;width:16.86px;text-align:right;transform:scaleX(0.9);transform-origin:100% 50%">21</div><div class="t" style="left:70.00px;top:382.51px;font-family:'Liberation Mono';font-size:15px;letter-spacing:-0.570px"><span style="color:#d4d4d4">    </span><span style="color:#9cdcfe">res</span><span style="color:#d4d4d4">.</span><span style="color:#dcdcaa">send</span><span style="color:#179fff">(</span><span style="color:#ce9178">&#x27;About Page!&#x27;</span><span style="color:#179fff">)</span><span style="color:#d4d4d4">;</span></div><div class="t" style="left:27.14px;top:402.31px;font-family:'Liberation Mono';font-size:15px;letter-spacing:-0.570px;color:#858585;width:16.86px;text-align:right;transform:scaleX(0.9);transform-origin:100% 50%">22</div><div class="t" style="left:70.00px;top:401.51px;font-family:'Liberation Mono';font-size:15px;letter-spacing:-0.570px"><span style="color:#da70d6">}</span><span style="color:#ffd700">)</span><span style="color:#d4d4d4">;</span></div><div class="t" style="left:27.14px;top:421.31px;font-family:'Liberation Mono';font-size:15px;letter-spacing:-0.570px;color:#858585;width:16.86px;text-align:right;transform:scaleX(0.9);transform-origin:100% 50%">23</div><div class="t" style="left:27.14px;top:440.31px;font-family:'Liberation Mono';font-size:15px;letter-spacing:-0.570px;color:#858585;width:16.86px;text-align:right;transform:scaleX(0.9);transform-origin:100% 50%">24</div><div class="t" style="left:70.00px;top:439.51px;font-family:'Liberation Mono';font-size:15px;letter-spacing:-0.570px"><span style="color:#4fc1ff">app</span><span style="color:#d4d4d4">.</span><span style="color:#dcdcaa">get</span><span style="color:#ffd700">(</span><span style="color:#ce9178">&#x27;/contact&#x27;</span><span style="color:#d4d4d4">, </span><span style="color:#da70d6">(</span><span style="color:#7c9aab">req</span><span style="color:#d4d4d4">, </span><span style="color:#9cdcfe">res</span><span style="color:#d4d4d4">, </span><span style="color:#a5a293">next</span><span style="color:#da70d6">)</span><span style="color:#d4d4d4"> </span><span style="color:#569cd6">=&gt;</span><span style="color:#d4d4d4"> </span><span style="color:#da70d6">{</span></div><div class="t" style="left:27.14px;top:459.31px;font-family:'Liberation Mono';font-size:15px;letter-spacing:-0.570px;color:#858585;width:16.86px;text-align:right;transform:scaleX(0.9);transform-origin:100% 50%">25</div><div class="t" style="left:70.00px;top:458.51px;font-family:'Liberation Mono';font-size:15px;letter-spacing:-0.570px"><span style="color:#d4d4d4">    </span><span style="color:#9cdcfe">res</span><span style="color:#d4d4d4">.</span><span style="color:#dcdcaa">send</span><span style="color:#179fff">(</span><span style="color:#ce9178">&#x27;Contact Page!&#x27;</span><span style="color:#179fff">)</span><span style="color:#d4d4d4">;</span></div><div class="t" style="left:27.14px;top:478.31px;font-family:'Liberation Mono';font-size:15px;letter-spacing:-0.570px;color:#858585;width:16.86px;text-align:right;transform:scaleX(0.9);transform-origin:100% 50%">26</div><div class="t" style="left:70.00px;top:477.51px;font-family:'Liberation Mono';font-size:15px;letter-spacing:-0.570px"><span style="color:#da70d6">}</span><span style="color:#ffd700">)</span><span style="color:#d4d4d4">;</span></div></div><svg style="left:265.5px;top:264.8px;" width="10" height="10" viewBox="0 0 10 10"><circle cx="5" cy="4.9" r="3.4" fill="none" stroke="#9a9a9a" stroke-width="1.5"/></svg><svg style="left:265.5px;top:321.8px;" width="10" height="10" viewBox="0 0 10 10"><circle cx="5" cy="4.9" r="3.4" fill="none" stroke="#9a9a9a" stroke-width="1.5"/></svg><svg style="left:265.5px;top:397.8px;" width="10" height="10" viewBox="0 0 10 10"><circle cx="5" cy="4.9" r="3.4" fill="none" stroke="#9a9a9a" stroke-width="1.5"/></svg><svg style="left:265.5px;top:454.8px;" width="10" height="10" viewBox="0 0 10 10"><circle cx="5" cy="4.9" r="3.4" fill="none" stroke="#9a9a9a" stroke-width="1.5"/></svg><div class="a" style="left:466.8px;top:162.6px;width:1.5px;height:1.5px;background:#8a8a8a;"></div><div class="a" style="left:470.40000000000003px;top:162.6px;width:1.5px;height:1.5px;background:#8a8a8a;"></div><div class="a" style="left:474.0px;top:162.6px;width:1.5px;height:1.5px;background:#8a8a8a;"></div><div class="a" style="left:1246px;top:146px;width:5.0px;height:2px;background:#569cd6;opacity:0.5;transform:scaleY(0.6)"></div><div class="a" style="left:1252px;top:146px;width:7.0px;height:2px;background:#dcdcaa;opacity:0.5;transform:scaleY(0.6)"></div><div class="a" style="left:1260px;top:146px;width:1.0px;height:2px;background:#d4d4d4;opacity:0.5;transform:scaleY(0.6)"></div><div class="a" style="left:1262px;top:146px;width:7.0px;height:2px;background:#dcdcaa;opacity:0.5;transform:scaleY(0.6)"></div><div class="a" style="left:1269px;top:146px;width:1.0px;height:2px;background:#ffd700;opacity:0.5;transform:scaleY(0.6)"></div><div class="a" style="left:1270px;top:146px;width:9.0px;height:2px;background:#ce9178;opacity:0.5;transform:scaleY(0.6)"></div><div class="a" style="left:1279px;top:146px;width:1.0px;height:2px;background:#ffd700;opacity:0.5;transform:scaleY(0.6)"></div><div class="a" style="left:1280px;top:146px;width:1.0px;height:2px;background:#d4d4d4;opacity:0.5;transform:scaleY(0.6)"></div><div class="a" style="left:1246px;top:148px;width:5.0px;height:2px;background:#569cd6;opacity:0.5;transform:scaleY(0.6)"></div><div class="a" style="left:1252px;top:148px;width:3.0px;height:2px;background:#4fc1ff;opacity:0.5;transform:scaleY(0.6)"></div><div class="a" style="left:1256px;top:148px;width:1.0px;height:2px;background:#d4d4d4;opacity:0.5;transform:scaleY(0.6)"></div><div class="a" style="left:1258px;top:148px;width:7.0px;height:2px;background:#dcdcaa;opacity:0.5;transform:scaleY(0.6)"></div><div class="a" style="left:1265px;top:148px;width:2.0px;height:2px;background:#ffd700;opacity:0.5;transform:scaleY(0.6)"></div><div class="a" style="left:1267px;top:148px;width:1.0px;height:2px;background:#d4d4d4;opacity:0.5;transform:scaleY(0.6)"></div><div class="a" style="left:1246px;top:150px;width:5.0px;height:2px;background:#569cd6;opacity:0.5;transform:scaleY(0.6)"></div><div class="a" style="left:1252px;top:150px;width:4.0px;height:2px;background:#4fc1ff;opacity:0.5;transform:scaleY(0.6)"></div><div class="a" style="left:1257px;top:150px;width:1.0px;height:2px;background:#d4d4d4;opacity:0.5;transform:scaleY(0.6)"></div><div class="a" style="left:1259px;top:150px;width:7.0px;height:2px;background:#dcdcaa;opacity:0.5;transform:scaleY(0.6)"></div><div class="a" style="left:1266px;top:150px;width:1.0px;height:2px;background:#ffd700;opacity:0.5;transform:scaleY(0.6)"></div><div class="a" style="left:1267px;top:150px;width:13.0px;height:2px;background:#ce9178;opacity:0.5;transform:scaleY(0.6)"></div><div class="a" style="left:1280px;top:150px;width:1.0px;height:2px;background:#ffd700;opacity:0.5;transform:scaleY(0.6)"></div><div class="a" style="left:1281px;top:150px;width:1.0px;height:2px;background:#d4d4d4;opacity:0.5;transform:scaleY(0.6)"></div><div class="a" style="left:1246px;top:154px;width:3.0px;height:2px;background:#4fc1ff;opacity:0.5;transform:scaleY(0.6)"></div><div class="a" style="left:1249px;top:154px;width:1.0px;height:2px;background:#d4d4d4;opacity:0.5;transform:scaleY(0.6)"></div><div class="a" style="left:1250px;top:154px;width:3.0px;height:2px;background:#dcdcaa;opacity:0.5;transform:scaleY(0.6)"></div><div class="a" style="left:1253px;top:154px;width:1.0px;height:2px;background:#ffd700;opacity:0.5;transform:scaleY(0.6)"></div><div class="a" style="left:1254px;top:154px;width:3.0px;height:2px;background:#ce9178;opacity:0.5;transform:scaleY(0.6)"></div><div class="a" style="left:1257px;top:154px;width:1.0px;height:2px;background:#d4d4d4;opacity:0.5;transform:scaleY(0.6)"></div><div class="a" style="left:1259px;top:154px;width:1.0px;height:2px;background:#da70d6;opacity:0.5;transform:scaleY(0.6)"></div><div class="a" style="left:1260px;top:154px;width:3.0px;height:2px;background:#9cdcfe;opacity:0.5;transform:scaleY(0.6)"></div><div class="a" style="left:1263px;top:154px;width:1.0px;height:2px;background:#d4d4d4;opacity:0.5;transform:scaleY(0.6)"></div><div class="a" style="left:1265px;top:154px;width:3.0px;height:2px;background:#9cdcfe;opacity:0.5;transform:scaleY(0.6)"></div><div class="a" style="left:1268px;top:154px;width:1.0px;height:2px;background:#da70d6;opacity:0.5;transform:scaleY(0.6)"></div><div class="a" style="left:1270px;top:154px;width:2.0px;height:2px;background:#569cd6;opacity:0.5;transform:scaleY(0.6)"></div><div class="a" style="left:1273px;top:154px;width:1.0px;height:2px;background:#da70d6;opacity:0.5;transform:scaleY(0.6)"></div><div class="a" style="left:1250px;top:158px;width:5.0px;height:2px;background:#569cd6;opacity:0.5;transform:scaleY(0.6)"></div><div class="a" style="left:1256px;top:158px;width:8.0px;height:2px;background:#4fc1ff;opacity:0.5;transform:scaleY(0.6)"></div><div class="a" style="left:1265px;top:158px;width:1.0px;height:2px;background:#d4d4d4;opacity:0.5;transform:scaleY(0.6)"></div><div class="a" style="left:1267px;top:158px;width:3.0px;height:2px;background:#9cdcfe;opacity:0.5;transform:scaleY(0.6)"></div><div class="a" style="left:1270px;top:158px;width:1.0px;height:2px;background:#d4d4d4;opacity:0.5;transform:scaleY(0.6)"></div><div class="a" style="left:1271px;top:158px;width:4.0px;height:2px;background:#9cdcfe;opacity:0.5;transform:scaleY(0.6)"></div><div class="a" style="left:1275px;top:158px;width:1.0px;height:2px;background:#d4d4d4;opacity:0.5;transform:scaleY(0.6)"></div><div class="a" style="left:1276px;top:158px;width:4.0px;height:2px;background:#9cdcfe;opacity:0.5;transform:scaleY(0.6)"></div><div class="a" style="left:1280px;top:158px;width:1.0px;height:2px;background:#d4d4d4;opacity:0.5;transform:scaleY(0.6)"></div><div class="a" style="left:1250px;top:162px;width:2.0px;height:2px;background:#c586c0;opacity:0.5;transform:scaleY(0.6)"></div><div class="a" style="left:1253px;top:162px;width:1.0px;height:2px;background:#179fff;opacity:0.5;transform:scaleY(0.6)"></div><div class="a" style="left:1254px;top:162px;width:8.0px;height:2px;background:#4fc1ff;opacity:0.5;transform:scaleY(0.6)"></div><div class="a" style="left:1262px;top:162px;width:1.0px;height:2px;background:#179fff;opacity:0.5;transform:scaleY(0.6)"></div><div class="a" style="left:1264px;top:162px;width:1.0px;height:2px;background:#179fff;opacity:0.5;transform:scaleY(0.6)"></div><div class="a" style="left:1254px;top:164px;width:5.0px;height:2px;background:#569cd6;opacity:0.5;transform:scaleY(0.6)"></div><div class="a" style="left:1260px;top:164px;width:10.0px;height:2px;background:#4fc1ff;opacity:0.5;transform:scaleY(0.6)"></div><div class="a" style="left:1271px;top:164px;width:1.0px;height:2px;background:#d4d4d4;opacity:0.5;transform:scaleY(0.6)"></div><div class="a" style="left:1273px;top:164px;width:4.0px;height:2px;background:#4fc1ff;opacity:0.5;transform:scaleY(0.6)"></div><div class="a" style="left:1277px;top:164px;width:1.0px;height:2px;background:#d4d4d4;opacity:0.5;transform:scaleY(0.6)"></div><div class="a" style="left:1278px;top:164px;width:6.0px;height:2px;background:#dcdcaa;opacity:0.5;transform:scaleY(0.6)"></div><div class="a" style="left:1284px;top:164px;width:1.0px;height:2px;background:#ffd700;opacity:0.5;transform:scaleY(0.6)"></div><div class="a" style="left:1285px;top:164px;width:1.0px;height:2px;background:#da70d6;opacity:0.5;transform:scaleY(0.6)"></div><div class="a" style="left:1286px;top:164px;width:4.0px;height:2px;background:#9cdcfe;opacity:0.5;transform:scaleY(0.6)"></div><div class="a" style="left:1290px;top:164px;width:1.0px;height:2px;background:#da70d6;opacity:0.5;transform:scaleY(0.6)"></div><div class="a" style="left:1292px;top:164px;width:2.0px;height:2px;background:#569cd6;opacity:0.5;transform:scaleY(0.6)"></div><div class="a" style="left:1295px;top:164px;width:1.0px;height:2px;background:#da70d6;opacity:0.5;transform:scaleY(0.6)"></div><div class="a" style="left:1258px;top:166px;width:6.0px;height:2px;background:#c586c0;opacity:0.5;transform:scaleY(0.6)"></div><div class="a" style="left:1265px;top:166px;width:4.0px;height:2px;background:#9cdcfe;opacity:0.5;transform:scaleY(0.6)"></div><div class="a" style="left:1269px;top:166px;width:1.0px;height:2px;background:#d4d4d4;opacity:0.5;transform:scaleY(0.6)"></div><div class="a" style="left:1270px;top:166px;width:4.0px;height:2px;background:#9cdcfe;opacity:0.5;transform:scaleY(0.6)"></div><div class="a" style="left:1275px;top:166px;width:3.0px;height:2px;background:#d4d4d4;opacity:0.5;transform:scaleY(0.6)"></div><div class="a" style="left:1279px;top:166px;width:8.0px;height:2px;background:#4fc1ff;opacity:0.5;transform:scaleY(0.6)"></div><div class="a" style="left:1287px;top:166px;width:1.0px;height:2px;background:#d4d4d4;opacity:0.5;transform:scaleY(0.6)"></div><div class="a" style="left:1254px;top:168px;width:1.0px;height:2px;background:#da70d6;opacity:0.5;transform:scaleY(0.6)"></div><div class="a" style="left:1254px;top:170px;width:1.0px;height:2px;background:#ffd700;opacity:0.5;transform:scaleY(0.6)"></div><div class="a" style="left:1255px;top:170px;width:1.0px;height:2px;background:#d4d4d4;opacity:0.5;transform:scaleY(0.6)"></div><div class="a" style="left:1254px;top:172px;width:3.0px;height:2px;background:#9cdcfe;opacity:0.5;transform:scaleY(0.6)"></div><div class="a" style="left:1257px;top:172px;width:1.0px;height:2px;background:#d4d4d4;opacity:0.5;transform:scaleY(0.6)"></div><div class="a" style="left:1258px;top:172px;width:4.0px;height:2px;background:#dcdcaa;opacity:0.5;transform:scaleY(0.6)"></div><div class="a" style="left:1262px;top:172px;width:1.0px;height:2px;background:#ffd700;opacity:0.5;transform:scaleY(0.6)"></div><div class="a" style="left:1263px;top:172px;width:10.0px;height:2px;background:#4fc1ff;opacity:0.5;transform:scaleY(0.6)"></div><div class="a" style="left:1273px;top:172px;width:1.0px;height:2px;background:#ffd700;opacity:0.5;transform:scaleY(0.6)"></div><div class="a" style="left:1274px;top:172px;width:1.0px;height:2px;background:#d4d4d4;opacity:0.5;transform:scaleY(0.6)"></div><div class="a" style="left:1250px;top:174px;width:1.0px;height:2px;background:#179fff;opacity:0.5;transform:scaleY(0.6)"></div><div class="a" style="left:1250px;top:178px;width:3.0px;height:2px;background:#9cdcfe;opacity:0.5;transform:scaleY(0.6)"></div><div class="a" style="left:1253px;top:178px;width:1.0px;height:2px;background:#d4d4d4;opacity:0.5;transform:scaleY(0.6)"></div><div class="a" style="left:1254px;top:178px;width:4.0px;height:2px;background:#dcdcaa;opacity:0.5;transform:scaleY(0.6)"></div><div class="a" style="left:1258px;top:178px;width:1.0px;height:2px;background:#179fff;opacity:0.5;transform:scaleY(0.6)"></div><div class="a" style="left:1259px;top:178px;width:4.0px;height:2px;background:#4fc1ff;opacity:0.5;transform:scaleY(0.6)"></div><div class="a" style="left:1263px;top:178px;width:1.0px;height:2px;background:#179fff;opacity:0.5;transform:scaleY(0.6)"></div><div class="a" style="left:1264px;top:178px;width:1.0px;height:2px;background:#d4d4d4;opacity:0.5;transform:scaleY(0.6)"></div><div class="a" style="left:1246px;top:180px;width:1.0px;height:2px;background:#da70d6;opacity:0.5;transform:scaleY(0.6)"></div><div class="a" style="left:1247px;top:180px;width:1.0px;height:2px;background:#ffd700;opacity:0.5;transform:scaleY(0.6)"></div><div class="a" style="left:1248px;top:180px;width:1.0px;height:2px;background:#d4d4d4;opacity:0.5;transform:scaleY(0.6)"></div><div class="a" style="left:1246px;top:184px;width:3.0px;height:2px;background:#4fc1ff;opacity:0.5;transform:scaleY(0.6)"></div><div class="a" style="left:1249px;top:184px;width:1.0px;height:2px;background:#d4d4d4;opacity:0.5;transform:scaleY(0.6)"></div><div class="a" style="left:1250px;top:184px;width:3.0px;height:2px;background:#dcdcaa;opacity:0.5;transform:scaleY(0.6)"></div><div class="a" style="left:1253px;top:184px;width:1.0px;height:2px;background:#ffd700;opacity:0.5;transform:scaleY(0.6)"></div><div class="a" style="left:1254px;top:184px;width:8.0px;height:2px;background:#ce9178;opacity:0.5;transform:scaleY(0.6)"></div><div class="a" style="left:1262px;top:184px;width:1.0px;height:2px;background:#d4d4d4;opacity:0.5;transform:scaleY(0.6)"></div><div class="a" style="left:1264px;top:184px;width:1.0px;height:2px;background:#da70d6;opacity:0.5;transform:scaleY(0.6)"></div><div class="a" style="left:1265px;top:184px;width:3.0px;height:2px;background:#7c9aab;opacity:0.5;transform:scaleY(0.6)"></div><div class="a" style="left:1268px;top:184px;width:1.0px;height:2px;background:#d4d4d4;opacity:0.5;transform:scaleY(0.6)"></div><div class="a" style="left:1270px;top:184px;width:3.0px;height:2px;background:#9cdcfe;opacity:0.5;transform:scaleY(0.6)"></div><div class="a" style="left:1273px;top:184px;width:1.0px;height:2px;background:#da70d6;opacity:0.5;transform:scaleY(0.6)"></div><div class="a" style="left:1275px;top:184px;width:2.0px;height:2px;background:#569cd6;opacity:0.5;transform:scaleY(0.6)"></div><div class="a" style="left:1278px;top:184px;width:1.0px;height:2px;background:#da70d6;opacity:0.5;transform:scaleY(0.6)"></div><div class="a" style="left:1250px;top:186px;width:3.0px;height:2px;background:#9cdcfe;opacity:0.5;transform:scaleY(0.6)"></div><div class="a" style="left:1253px;top:186px;width:1.0px;height:2px;background:#d4d4d4;opacity:0.5;transform:scaleY(0.6)"></div><div class="a" style="left:1254px;top:186px;width:4.0px;height:2px;background:#dcdcaa;opacity:0.5;transform:scaleY(0.6)"></div><div class="a" style="left:1258px;top:186px;width:1.0px;height:2px;background:#179fff;opacity:0.5;transform:scaleY(0.6)"></div><div class="a" style="left:1259px;top:186px;width:6.0px;height:2px;background:#ce9178;opacity:0.5;transform:scaleY(0.6)"></div><div class="a" style="left:1266px;top:186px;width:6.0px;height:2px;background:#ce9178;opacity:0.5;transform:scaleY(0.6)"></div><div class="a" style="left:1272px;top:186px;width:1.0px;height:2px;background:#179fff;opacity:0.5;transform:scaleY(0.6)"></div><div class="a" style="left:1273px;top:186px;width:1.0px;height:2px;background:#d4d4d4;opacity:0.5;transform:scaleY(0.6)"></div><div class="a" style="left:1246px;top:188px;width:1.0px;height:2px;background:#da70d6;opacity:0.5;transform:scaleY(0.6)"></div><div class="a" style="left:1247px;top:188px;width:1.0px;height:2px;background:#ffd700;opacity:0.5;transform:scaleY(0.6)"></div><div class="a" style="left:1248px;top:188px;width:1.0px;height:2px;background:#d4d4d4;opacity:0.5;transform:scaleY(0.6)"></div><div class="a" style="left:1246px;top:192px;width:3.0px;height:2px;background:#4fc1ff;opacity:0.5;transform:scaleY(0.6)"></div><div class="a" style="left:1249px;top:192px;width:1.0px;height:2px;background:#d4d4d4;opacity:0.5;transform:scaleY(0.6)"></div><div class="a" style="left:1250px;top:192px;width:3.0px;height:2px;background:#dcdcaa;opacity:0.5;transform:scaleY(0.6)"></div><div class="a" style="left:1253px;top:192px;width:1.0px;height:2px;background:#ffd700;opacity:0.5;transform:scaleY(0.6)"></div><div class="a" style="left:1254px;top:192px;width:10.0px;height:2px;background:#ce9178;opacity:0.5;transform:scaleY(0.6)"></div><div class="a" style="left:1264px;top:192px;width:1.0px;height:2px;background:#d4d4d4;opacity:0.5;transform:scaleY(0.6)"></div><div class="a" style="left:1266px;top:192px;width:1.0px;height:2px;background:#da70d6;opacity:0.5;transform:scaleY(0.6)"></div><div class="a" style="left:1267px;top:192px;width:3.0px;height:2px;background:#7c9aab;opacity:0.5;transform:scaleY(0.6)"></div><div class="a" style="left:1270px;top:192px;width:1.0px;height:2px;background:#d4d4d4;opacity:0.5;transform:scaleY(0.6)"></div><div class="a" style="left:1272px;top:192px;width:3.0px;height:2px;background:#9cdcfe;opacity:0.5;transform:scaleY(0.6)"></div><div class="a" style="left:1275px;top:192px;width:1.0px;height:2px;background:#d4d4d4;opacity:0.5;transform:scaleY(0.6)"></div><div class="a" style="left:1277px;top:192px;width:4.0px;height:2px;background:#a5a293;opacity:0.5;transform:scaleY(0.6)"></div><div class="a" style="left:1281px;top:192px;width:1.0px;height:2px;background:#da70d6;opacity:0.5;transform:scaleY(0.6)"></div><div class="a" style="left:1283px;top:192px;width:2.0px;height:2px;background:#569cd6;opacity:0.5;transform:scaleY(0.6)"></div><div class="a" style="left:1286px;top:192px;width:1.0px;height:2px;background:#da70d6;opacity:0.5;transform:scaleY(0.6)"></div><div class="a" style="left:1250px;top:194px;width:3.0px;height:2px;background:#9cdcfe;opacity:0.5;transform:scaleY(0.6)"></div><div class="a" style="left:1253px;top:194px;width:1.0px;height:2px;background:#d4d4d4;opacity:0.5;transform:scaleY(0.6)"></div><div class="a" style="left:1254px;top:194px;width:4.0px;height:2px;background:#dcdcaa;opacity:0.5;transform:scaleY(0.6)"></div><div class="a" style="left:1258px;top:194px;width:1.0px;height:2px;background:#179fff;opacity:0.5;transform:scaleY(0.6)"></div><div class="a" style="left:1259px;top:194px;width:8.0px;height:2px;background:#ce9178;opacity:0.5;transform:scaleY(0.6)"></div><div class="a" style="left:1268px;top:194px;width:6.0px;height:2px;background:#ce9178;opacity:0.5;transform:scaleY(0.6)"></div><div class="a" style="left:1274px;top:194px;width:1.0px;height:2px;background:#179fff;opacity:0.5;transform:scaleY(0.6)"></div><div class="a" style="left:1275px;top:194px;width:1.0px;height:2px;background:#d4d4d4;opacity:0.5;transform:scaleY(0.6)"></div><div class="a" style="left:1246px;top:196px;width:1.0px;height:2px;background:#da70d6;opacity:0.5;transform:scaleY(0.6)"></div><div class="a" style="left:1247px;top:196px;width:1.0px;height:2px;background:#ffd700;opacity:0.5;transform:scaleY(0.6)"></div><div class="a" style="left:1248px;top:196px;width:1.0px;height:2px;background:#d4d4d4;opacity:0.5;transform:scaleY(0.6)"></div><div class="a" style="left:1246px;top:164px;width:108px;height:2px;background:#264f78;transform:scaleY(0.75)"></div><div class="a" style="left:1246px;top:164px;width:50px;height:2px;background:#2c5a8a;transform:scaleY(0.75)"></div><div class="a" style="left:1246px;top:205px;width:3.0px;height:2px;background:#4fc1ff;opacity:0.5;transform:scaleY(0.6)"></div><div class="a" style="left:1249px;top:205px;width:1.0px;height:2px;background:#d4d4d4;opacity:0.5;transform:scaleY(0.6)"></div><div class="a" style="left:1250px;top:205px;width:6.0px;height:2px;background:#dcdcaa;opacity:0.5;transform:scaleY(0.6)"></div><div class="a" style="left:1256px;top:205px;width:1.0px;height:2px;background:#ffd700;opacity:0.5;transform:scaleY(0.6)"></div><div class="a" style="left:1257px;top:205px;width:4.0px;height:2px;background:#4fc1ff;opacity:0.5;transform:scaleY(0.6)"></div><div class="a" style="left:1261px;top:205px;width:1.0px;height:2px;background:#d4d4d4;opacity:0.5;transform:scaleY(0.6)"></div><div class="a" style="left:1263px;top:205px;width:2.0px;height:2px;background:#da70d6;opacity:0.5;transform:scaleY(0.6)"></div><div class="a" style="left:1266px;top:205px;width:2.0px;height:2px;background:#569cd6;opacity:0.5;transform:scaleY(0.6)"></div><div class="a" style="left:1269px;top:205px;width:7.0px;height:2px;background:#dcdcaa;opacity:0.5;transform:scaleY(0.6)"></div><div class="a" style="left:1276px;top:205px;width:1.0px;height:2px;background:#d4d4d4;opacity:0.5;transform:scaleY(0.6)"></div><div class="a" style="left:1277px;top:205px;width:3.0px;height:2px;background:#dcdcaa;opacity:0.5;transform:scaleY(0.6)"></div><div class="a" style="left:1280px;top:205px;width:1.0px;height:2px;background:#da70d6;opacity:0.5;transform:scaleY(0.6)"></div><div class="a" style="left:1281px;top:205px;width:7.0px;height:2px;background:#ce9178;opacity:0.5;transform:scaleY(0.6)"></div><div class="a" style="left:1289px;top:205px;width:2.0px;height:2px;background:#ce9178;opacity:0.5;transform:scaleY(0.6)"></div><div class="a" style="left:1292px;top:205px;width:7.0px;height:2px;background:#ce9178;opacity:0.5;transform:scaleY(0.6)"></div><div class="a" style="left:1300px;top:205px;width:2.0px;height:2px;background:#ce9178;opacity:0.5;transform:scaleY(0.6)"></div><div class="a" style="left:1303px;top:205px;width:4.0px;height:2px;background:#ce9178;opacity:0.5;transform:scaleY(0.6)"></div><div class="a" style="left:1308px;top:205px;width:8.0px;height:2px;background:#ce9178;opacity:0.5;transform:scaleY(0.6)"></div><div class="a" style="left:1316px;top:205px;width:1.0px;height:2px;background:#da70d6;opacity:0.5;transform:scaleY(0.6)"></div><div class="a" style="left:1317px;top:205px;width:1.0px;height:2px;background:#ffd700;opacity:0.5;transform:scaleY(0.6)"></div><div class="a" style="left:1318px;top:205px;width:1.0px;height:2px;background:#d4d4d4;opacity:0.5;transform:scaleY(0.6)"></div><div class="a" style="left:1354px;top:146px;width:1px;height:471px;background:#303030;"></div><div class="a" style="left:1355px;top:146px;width:13px;height:209px;background:#424242;"></div><div class="a" style="left:1355px;top:220px;width:13px;height:2px;background:#a0a0a0;"></div><div class="a" style="left:658px;top:124px;width:179px;height:32px;background:#333333;box-shadow:0 0 8px rgba(0,0,0,0.6)"></div><div class="a" style="left:670.0px;top:135px;width:2px;height:2px;background:#858585;"></div><div class="a" style="left:670.0px;top:139px;width:2px;height:2px;background:#858585;"></div><div class="a" style="left:670.0px;top:143px;width:2px;height:2px;background:#858585;"></div><div class="a" style="left:674.4px;top:135px;width:2px;height:2px;background:#858585;"></div><div class="a" style="left:674.4px;top:139px;width:2px;height:2px;background:#858585;"></div><div class="a" style="left:674.4px;top:143px;width:2px;height:2px;background:#858585;"></div><div class="a" style="left:688px;top:135px;width:2px;height:10px;background:#75beff;"></div><div class="a" style="left:694.2px;top:135px;width:2px;height:10px;background:#75beff;"></div><svg style="left:711px;top:133px;" width="14" height="14" viewBox="0 0 14 14"><path d="M1.5 7.5 A5.4 5.4 0 0 1 11.8 4.6" fill="none" stroke="#4e6e8c" stroke-width="1.3"/><path d="M12.6 0.8 V5.4 H8" fill="none" stroke="#4e6e8c" stroke-width="1.3"/><circle cx="6.6" cy="11.2" r="1.6" fill="#4e6e8c"/></svg><svg style="left:737px;top:133px;" width="14" height="14" viewBox="0 0 14 14"><path d="M6.8 0.5 V7.4 M3 3.8 L6.8 7.6 L10.6 3.8" fill="none" stroke="#4e6e8c" stroke-width="1.3"/><circle cx="6.8" cy="11.4" r="1.6" fill="#4e6e8c"/></svg><svg style="left:763px;top:133px;" width="14" height="14" viewBox="0 0 14 14"><path d="M6.8 8.6 V1 M3 4.8 L6.8 1 L10.6 4.8" fill="none" stroke="#4e6e8c" stroke-width="1.3"/><circle cx="6.8" cy="11.4" r="1.6" fill="#4e6e8c"/></svg><svg style="left:789px;top:133px;" width="14" height="14" viewBox="0 0 14 14"><path d="M3.2 3.6 A5.3 5.3 0 1 1 2 8.2" fill="none" stroke="#89d185" stroke-width="1.5"/><path d="M1.8 0.6 V4.8 H6" fill="none" stroke="#89d185" stroke-width="1.5"/></svg><svg style="left:811.5px;top:130px;" width="20" height="20" viewBox="0 0 20 20"><g transform="translate(10,10) rotate(-45)"><path d="M-2.3 -3.4 A3.5 3.5 0 0 0 -2.3 3.4 Z M2.3 -3.4 A3.5 3.5 0 0 1 2.3 3.4 Z" fill="none" stroke="#f48771" stroke-width="1.3" stroke-linejoin="round"/><path d="M-5.8 0 H-9.6 M5.8 0 H9.6 M-2.3 -1.5 H-0.5 M-2.3 1.5 H-0.5" stroke="#f48771" stroke-width="1.3"/></g></svg><div class="a" style="left:261px;top:617px;width:1107px;height:77px;background:#1e1e1e;"></div><div class="a" style="left:261px;top:617px;width:1107px;height:1px;background:#414141;"></div><div class="t" style='left:281.20px;top:629.79px;font-size:11px;color:#969696;letter-spacing:-0.642px;'>PROBLEMS</div><div class="t" style='left:361.80px;top:629.79px;font-size:11px;color:#969696;letter-spacing:-0.660px;'>OUTPUT</div><div class="t" style='left:428.30px;top:629.79px;font-size:11px;color:#e7e7e7;letter-spacing:-0.661px;'>DEBUG CONSOLE</div><div class="t" style='left:541.00px;top:629.79px;font-size:11px;color:#969696;letter-spacing:-0.543px;'>TERMINAL</div><div class="a" style="left:426px;top:647px;width:93px;height:1px;background:#e7e7e7;"></div><div class="a" style="left:986px;top:624px;width:300px;height:24px;background:#3c3c3c;"></div><div class="t" style='left:990.20px;top:629.19px;font-size:13px;color:#8b8b8b;letter-spacing:-0.249px;'>Filter (e.g. text, !exclude)</div><svg style="left:1293px;top:630px;" width="16" height="12" viewBox="0 0 16 12"><path d="M0.6 1 H14.6 M0.6 4.6 H14.6 M0.6 8.2 H8.4 M0.6 11.4 H8.4 M10.4 7.6 L14.2 11.4 M14.2 7.6 L10.4 11.4" stroke="#c5c5c5" stroke-width="1.1"/></svg><svg style="left:1321px;top:631px;" width="12" height="7" viewBox="0 0 12 7"><path d="M0.6 6.2 L5.8 1 L11 6.2" fill="none" stroke="#c5c5c5" stroke-width="1.2"/></svg><svg style="left:1344px;top:630.5px;" width="10" height="10" viewBox="0 0 10 10"><path d="M0.6 0.6 L9.2 9.2 M9.2 0.6 L0.6 9.2" stroke="#c5c5c5" stroke-width="1.2"/></svg><div class="a" style="left:261px;top:674px;width:1107px;height:1px;background:#414141;"></div><svg style="left:273.5px;top:679.5px;" width="8" height="11" viewBox="0 0 8 11"><path d="M1 0.8 L6 5.2 L1 9.6" fill="none" stroke="#cccccc" stroke-width="1.3"/></svg><div class="a" style="left:0px;top:694px;width:1368px;height:20px;background:#cc6633;"></div><svg style="left:15px;top:697px;" width="14" height="15" viewBox="0 0 14 15"><circle cx="3" cy="2.6" r="1.9" fill="none" stroke="#ffffff" stroke-width="1.2"/><circle cx="3" cy="12.4" r="1.9" fill="none" stroke="#ffffff" stroke-width="1.2"/><circle cx="10.6" cy="4.4" r="1.9" fill="none" stroke="#ffffff" stroke-width="1.2"/><path d="M3 4.5 V10.5 M10.6 6.3 Q10.6 9.5 4.6 11" fill="none" stroke="#ffffff" stroke-width="1.2"/></svg><div class="t" style='left:32.00px;top:698.09px;font-size:13px;color:#ffffff;letter-spacing:-0.158px;'>development*</div><svg style="left:126px;top:697px;" width="15" height="15" viewBox="0 0 15 15"><path d="M2.2 8.5 A5.3 5.3 0 0 1 11.5 4.2 M12.8 6.5 A5.3 5.3 0 0 1 3.5 10.8" fill="none" stroke="#ffffff" stroke-width="1.3"/><path d="M9.6 4.6 H12.6 V1.6 M5.4 10.4 H2.4 V13.4" fill="none" stroke="#ffffff" stroke-width="1.3"/></svg><svg style="left:157px;top:698px;" width="13" height="13" viewBox="0 0 13 13"><circle cx="6" cy="6.3" r="5.4" fill="none" stroke="#ffffff" stroke-width="1.2"/><path d="M3.8 4.1 L8.2 8.5 M8.2 4.1 L3.8 8.5" stroke="#ffffff" stroke-width="1.2"/></svg><div class="t" style='left:173.00px;top:698.09px;font-size:13px;color:#ffffff;'>0</div><svg style="left:183px;top:697px;" width="13" height="13" viewBox="0 0 13 13"><path d="M6.2 1 L12 11.8 H0.5 Z" fill="none" stroke="#ffffff" stroke-width="1.2" stroke-linejoin="round"/><path d="M6.2 4.8 V8.2 M6.2 9.4 V10.6" stroke="#ffffff" stroke-width="1.2"/></svg><div class="t" style='left:199.60px;top:698.09px;font-size:13px;color:#ffffff;'>0</div><svg style="left:221px;top:697px;" width="15" height="15" viewBox="0 0 15 15"><path d="M5.5 1.5 L13.5 7 L8.5 10.5" fill="none" stroke="#ffffff" stroke-width="1.2"/><path d="M5.5 1.5 V5" stroke="#ffffff" stroke-width="1.2"/><ellipse cx="4.5" cy="10.6" rx="2.6" ry="3" fill="none" stroke="#ffffff" stroke-width="1.2"/><path d="M1 9 H8 M1 12.5 H8" stroke="#ffffff" stroke-width="1"/></svg><div class="t" style='left:718.90px;top:698.09px;font-size:13px;color:#ffffff;letter-spacing:-0.533px;'>Ln 10, Col 51 (50 selected)</div><div class="t" style='left:877.50px;top:698.09px;font-size:13px;color:#ffffff;letter-spacing:-1.011px;'>Spaces: 4</div><div class="t" style='left:942.30px;top:698.09px;font-size:13px;color:#ffffff;letter-spacing:-1.000px;'>UTF-8</div><div class="t" style='left:990.50px;top:698.09px;font-size:13px;color:#ffffff;letter-spacing:-2.730px;'>LF</div><div class="t" style='left:1019.00px;top:698.94px;font-size:12px;color:#ffffff;letter-spacing:-0.671px;'>{ }</div><div class="t" style='left:1037.70px;top:698.09px;font-size:13px;color:#ffffff;letter-spacing:-0.675px;'>JavaScript</div><svg style="left:1110px;top:697px;" width="14" height="15" viewBox="0 0 14 15"><circle cx="6.8" cy="7.1" r="1.2" fill="#ffffff"/><path d="M4.5 9.4 A3.2 3.2 0 1 1 9.1 9.4 M3 10.9 A5.1 5.1 0 1 1 10.6 10.9" fill="none" stroke="#ffffff" stroke-width="1.1"/><path d="M6.8 8 V13.8" stroke="#ffffff" stroke-width="1.8"/></svg><div class="t" style='left:1126.60px;top:698.09px;font-size:13px;color:#ffffff;letter-spacing:-0.929px;'>Go Live</div><svg style="left:1182px;top:699px;" width="15" height="13" viewBox="0 0 15 13"><path d="M0.8 6.2 Q0.4 12.6 7.2 12.6 Q14 12.6 13.6 6.2 Z" fill="#ffffff"/><circle cx="4" cy="4" r="2.8" fill="#cc6633" stroke="#ffffff" stroke-width="1.6"/><circle cx="10.4" cy="4" r="2.8" fill="#cc6633" stroke="#ffffff" stroke-width="1.6"/><rect x="5.3" y="8.4" width="1.3" height="2" fill="#cc6633"/><rect x="7.9" y="8.4" width="1.3" height="2" fill="#cc6633"/></svg><div class="t" style='left:1211.60px;top:698.09px;font-size:13px;color:#ffffff;letter-spacing:-0.073px;'>Formatting:</div><svg style="left:1280px;top:699px;" width="12" height="11" viewBox="0 0 12 11"><path d="M0.7 5.5 L4 9.5 L11 0.8" fill="none" stroke="#ffffff" stroke-width="1.2"/></svg><svg style="left:1309px;top:697px;" width="14" height="14" viewBox="0 0 14 14"><circle cx="5.2" cy="5.4" r="2.6" fill="none" stroke="#ffffff" stroke-width="1.2"/><path d="M0.8 13.5 Q1.2 8.8 5.2 8.8 Q9.2 8.8 9.6 13.5" fill="none" stroke="#ffffff" stroke-width="1.2"/><path d="M7 1 H13 V6 H10.5 L9 7.5" fill="none" stroke="#ffffff" stroke-width="1.1"/></svg><svg style="left:1340px;top:697px;" width="13" height="15" viewBox="0 0 13 15"><path d="M6.3 1.2 Q10.8 1.2 10.8 6 V9.6 L12.2 11.6 H0.6 L2 9.6 V6 Q2 1.2 6.3 1.2 Z" fill="none" stroke="#ffffff" stroke-width="1.2" stroke-linejoin="round"/><path d="M4.6 13 Q6.4 14.6 8.2 13" fill="none" stroke="#ffffff" stroke-width="1.2"/></svg></body></html>
